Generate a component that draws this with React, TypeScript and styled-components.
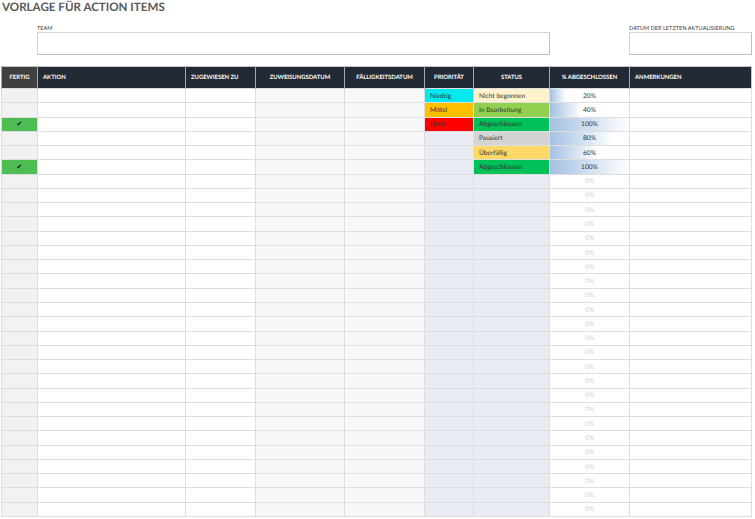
import styled, { createGlobalStyle } from 'styled-components'

type Row = {
  done?: boolean
  priority?: 'Niedrig' | 'Mittel' | 'Hoch'
  status?: string
  percent: number
}

const seeded: Row[] = [
  { priority: 'Niedrig', status: 'Nicht begonnen', percent: 20 },
  { priority: 'Mittel', status: 'In Bearbeitung', percent: 40 },
  { done: true, priority: 'Hoch', status: 'Abgeschlossen', percent: 100 },
  { status: 'Pausiert', percent: 80 },
  { status: 'Überfällig', percent: 60 },
  { done: true, status: 'Abgeschlossen', percent: 100 },
]

const rows: Row[] = [
  ...seeded,
  ...Array.from({ length: 24 }, () => ({ percent: 0 })),
]

const priorityColors: Record<string, string> = {
  Niedrig: '#00e8f0',
  Mittel: '#ffc000',
  Hoch: '#ff0000',
}

const statusColors: Record<string, string> = {
  'Nicht begonnen': '#fff2cc',
  'In Bearbeitung': '#92d050',
  Abgeschlossen: '#00c058',
  Pausiert: '#d4d4d4',
  Überfällig: '#ffd966',
}

export default function App() {
  return (
    <Page>
      <GlobalStyle />
      <Title>VORLAGE FÜR ACTION ITEMS</Title>
      <MetaRow>
        <MetaField>
          <MetaLabel>TEAM</MetaLabel>
          <MetaBox />
        </MetaField>
        <MetaField>
          <MetaLabel>DATUM DER LETZTEN AKTUALISIERUNG</MetaLabel>
          <MetaBox />
        </MetaField>
      </MetaRow>
      <Sheet>
        <colgroup>
          <col style={{ width: 36 }} />
          <col style={{ width: 148 }} />
          <col style={{ width: 70 }} />
          <col style={{ width: 89 }} />
          <col style={{ width: 80 }} />
          <col style={{ width: 49 }} />
          <col style={{ width: 76 }} />
          <col style={{ width: 80 }} />
          <col />
        </colgroup>
        <thead>
          <tr>
            <HeadCell $bg="#404040" $center>FERTIG</HeadCell>
            <HeadCell>AKTION</HeadCell>
            <HeadCell>ZUGEWIESEN ZU</HeadCell>
            <HeadCell $center>ZUWEISUNGSDATUM</HeadCell>
            <HeadCell $center>FÄLLIGKEITSDATUM</HeadCell>
            <HeadCell $center>PRIORITÄT</HeadCell>
            <HeadCell $center>STATUS</HeadCell>
            <HeadCell $center>% ABGESCHLOSSEN</HeadCell>
            <HeadCell>ANMERKUNGEN</HeadCell>
          </tr>
        </thead>
        <tbody>
          {rows.map((row, i) => (
            <tr key={i}>
              <DoneCell $done={row.done}>{row.done ? '✔' : ''}</DoneCell>
              <Cell />
              <Cell />
              <Cell $bg="#f7f8fa" />
              <Cell $bg="#f7f8fa" />
              <Cell $bg={row.priority ? priorityColors[row.priority] : '#e9ecf2'}>
                {row.priority}
              </Cell>
              <Cell $bg={row.status ? statusColors[row.status] : '#e9ecf2'}>
                {row.status}
              </Cell>
              <PercentCell $percent={row.percent}>{row.percent}%</PercentCell>
              <Cell />
            </tr>
          ))}
        </tbody>
      </Sheet>
    </Page>
  )
}

const GlobalStyle = createGlobalStyle`
  html, body {
    margin: 0;
    background: #ffffff;
  }
`

const Page = styled.div`
  width: 755px;
  height: 519px;
  overflow: hidden;
  padding: 0 3px 0 1px;
  box-sizing: border-box;
  font-family: Lato, "Liberation Sans", sans-serif;
  color: #222222;
  text-rendering: geometricPrecision;
`

const Title = styled.h1`
  margin: 0 0 0 1px;
  height: 25px;
  font-size: 11.6px;
  line-height: 16px;
  font-weight: 700;
  color: #595959;
`

const MetaRow = styled.div`
  display: grid;
  grid-template-columns: 513px 123px;
  justify-content: space-between;
  height: 41px;
  padding-left: 36px;
`

const MetaField = styled.div`
  display: flex;
  flex-direction: column;
`

const MetaLabel = styled.div`
  height: 7px;
  font-size: 5.6px;
  line-height: 7px;
  color: #404040;
  white-space: nowrap;
`

const MetaBox = styled.div`
  height: 23px;
  box-sizing: border-box;
  border: 1px solid #d4d4d4;
  border-bottom-color: #bfbfbf;
  border-right-color: #bfbfbf;
`

const Sheet = styled.table`
  width: 751px;
  table-layout: fixed;
  border-collapse: collapse;
  border: 1px solid #c4c4c4;
`

const HeadCell = styled.th<{ $bg?: string; $center?: boolean }>`
  height: 21px;
  padding: 0 5px;
  background: ${(p) => p.$bg ?? '#222b35'};
  border-left: 1px solid #a6a6a6;
  color: #ffffff;
  font-size: 5.9px;
  font-weight: 700;
  text-align: ${(p) => (p.$center ? 'center' : 'left')};
  white-space: nowrap;
  overflow: hidden;
`

const Cell = styled.td<{ $bg?: string }>`
  height: 14.27px;
  padding: 0 0 0 5px;
  box-sizing: border-box;
  background: ${(p) => p.$bg ?? '#ffffff'};
  border: 1px solid #dedede;
  font-size: 6.6px;
  line-height: 12px;
  color: #333333;
  white-space: nowrap;
  overflow: hidden;
`

const DoneCell = styled.td<{ $done?: boolean }>`
  height: 14.27px;
  padding: 0;
  box-sizing: border-box;
  background: ${(p) => (p.$done ? '#4dbd54' : '#f2f2f2')};
  border: 1px solid #dedede;
  font-size: 7px;
  line-height: 12px;
  text-align: center;
  color: #1a1a1a;
`

const PercentCell = styled.td<{ $percent: number }>`
  height: 14.27px;
  padding: 0;
  box-sizing: border-box;
  border: 1px solid #dedede;
  font-size: 6.6px;
  line-height: 12px;
  text-align: center;
  color: ${(p) => (p.$percent ? '#333333' : '#d0d0d0')};
  background-color: #ffffff;
  background-image: linear-gradient(to right, #a3c1e2, #ffffff);
  background-repeat: no-repeat;
  background-size: ${(p) => p.$percent}% 100%;
`
